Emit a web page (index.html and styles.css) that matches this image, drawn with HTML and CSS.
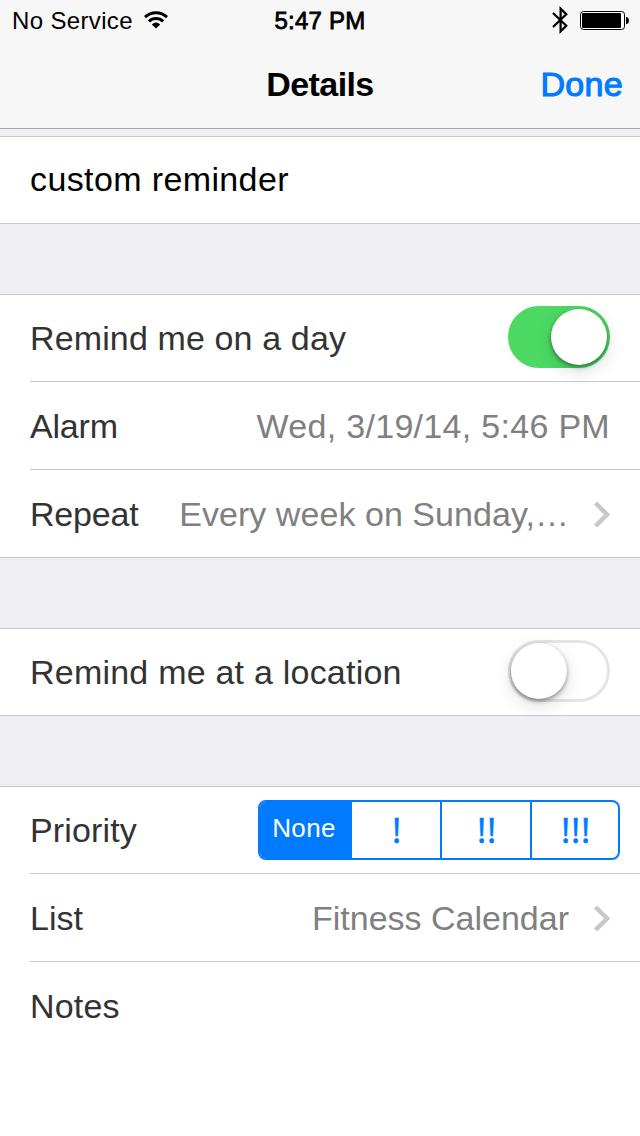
FILE: index.html
```html
<!DOCTYPE html>
<html lang="en">
<head>
<meta charset="utf-8">
<title>Details</title>
<link rel="stylesheet" href="styles.css">
</head>
<body>
<header class="top">
  <div class="status">
    <div class="status-left">
      <span class="carrier">No Service</span>
      <svg class="wifi" width="24" height="18" viewBox="0 0 24 18">
        <g fill="none" stroke="#000">
          <path d="M1 6.100A16 16 0 0 1 23 6.100" stroke-width="3"/>
          <path d="M4.900 10.400A10.300 10.300 0 0 1 19.100 10.400" stroke-width="2.900"/>
        </g>
        <path d="M12 17.600L7.800 13.400A6.500 6.500 0 0 1 16.200 13.400Z"/>
      </svg>
    </div>
    <span class="time">5:47 PM</span>
    <div class="status-right">
      <svg class="bluetooth" width="18" height="28" viewBox="0 0 18 28">
        <path d="M2 7L15.300 19.700L9.600 25.300V2.700L15.300 8.300L2 21" fill="none" stroke="#000" stroke-width="2.200"/>
      </svg>
      <svg class="battery" width="50" height="20" viewBox="0 0 50 20">
        <rect x="0.5" y="0.5" width="44" height="18" rx="3" fill="#fff" stroke="#000"/>
        <rect x="2" y="2" width="39" height="15" rx="1"/>
        <path d="M46 6h1q2 1 2 3.500t-2 3.500h-1z"/>
      </svg>
    </div>
  </div>
  <nav class="nav">
    <h1 class="title">Details</h1>
    <a class="done">Done</a>
  </nav>
</header>
<main>
  <section class="group">
    <div class="row"><span class="entry">custom reminder</span></div>
  </section>
  <section class="group">
    <div class="row">
      <span class="label day">Remind me on a day</span>
      <span class="switch on"><span class="knob"></span></span>
    </div>
    <div class="row">
      <span class="label alarm">Alarm</span>
      <span class="value date">Wed, 3/19/14, 5:46 PM</span>
    </div>
    <div class="row">
      <span class="label repeat">Repeat</span>
      <span class="value every">Every week on Sunday,…</span>
      <svg class="chevron" width="17" height="26" viewBox="0 0 17 26"><path d="M2.500 2L14 13.500L2.500 25" fill="none" stroke="#c7c7cc" stroke-width="4.500"/></svg>
    </div>
  </section>
  <section class="group">
    <div class="row">
      <span class="label location">Remind me at a location</span>
      <span class="switch"><span class="knob"></span></span>
    </div>
  </section>
  <section class="group last">
    <div class="row priority-row">
      <span class="label priority">Priority</span>
      <div class="segments">
        <span class="segment selected">None</span>
        <span class="segment">!</span>
        <span class="segment">!!</span>
        <span class="segment">!!!</span>
      </div>
    </div>
    <div class="row">
      <span class="label list">List</span>
      <span class="value calendar">Fitness Calendar</span>
      <svg class="chevron" width="17" height="26" viewBox="0 0 17 26"><path d="M2.500 2L14 13.500L2.500 25" fill="none" stroke="#c7c7cc" stroke-width="4.500"/></svg>
    </div>
    <div class="row">
      <span class="label notes">Notes</span>
    </div>
  </section>
</main>
</body>
</html>
```
FILE: styles.css
```css
* { box-sizing: border-box; }

body {
  margin: 0;
  width: 640px;
  height: 1136px;
  overflow: hidden;
  display: flex;
  flex-direction: column;
  background: #efeff4;
  font-family: "Liberation Sans", Arial, sans-serif;
  font-size: 34px;
  color: #333;
}

.top {
  height: 129px;
  flex: none;
  background: #f7f7f7;
  border-bottom: 1px solid #a7a7aa;
  color: #000;
}

.status {
  height: 40px;
  padding: 0 10px 0 12px;
  display: grid;
  grid-template-columns: 1fr auto 1fr;
  align-items: center;
  font-size: 24px;
}

.status-left, .status-right { display: flex; align-items: center; }
.status-right { justify-content: flex-end; gap: 11px; }
.carrier { letter-spacing: 0.35px; line-height: 38px; padding-top: 2px; }
.wifi { margin: 0 0 1px 11px; }
.bluetooth { margin-bottom: 1px; }
.battery { margin-top: 2px; }
.time { -webkit-text-stroke: 0.8px #000; letter-spacing: 0.25px; margin-right: 2px; padding-top: 2px; }

.nav {
  height: 88px;
  padding: 0 17px;
  display: grid;
  grid-template-columns: 1fr auto 1fr;
  align-items: center;
}

.title {
  grid-column: 2;
  margin: 0;
  font-size: 34px;
  font-weight: 700;
  letter-spacing: -0.6px;
}

.done {
  justify-self: end;
  color: #007aff;
  letter-spacing: 0.3px;
  -webkit-text-stroke: 1.1px #007aff;
}

main {
  flex: 1;
  padding-top: 7px;
  display: flex;
  flex-direction: column;
  gap: 70px;
}

.group {
  background: #fff;
  border-top: 1px solid #c8c7cc;
  border-bottom: 1px solid #c8c7cc;
}

.group.last { flex: 1; border-bottom: 0; }

.row {
  height: 88px;
  margin-left: 30px;
  padding-right: 30px;
  display: flex;
  align-items: center;
  justify-content: space-between;
  border-bottom: 1px solid #c8c7cc;
  white-space: nowrap;
}

.row:first-child { height: 87px; }
.row:last-child { border-bottom: 0; }
.group:not(.last) .row:last-child { height: 87px; }
.group:not(.last) .row:only-child { height: 86px; }
.row.priority-row { padding-right: 20px; }

.entry { color: #000; letter-spacing: 0.38px; padding-bottom: 1px; }
.label { padding-top: 2px; }
.value { padding-top: 2px; margin-left: auto; color: #808080; }
.chevron { margin-left: 24px; }

.day { letter-spacing: 0.13px; }
.alarm, .repeat { letter-spacing: -0.2px; }
.location { letter-spacing: 0.22px; }
.priority { letter-spacing: 0.15px; }
.notes { letter-spacing: 0.2px; }
.date { letter-spacing: 0.3px; }
.every { letter-spacing: 0.05px; }
.day, .location, .priority, .notes { padding-top: 0; }

.switch {
  width: 102px;
  height: 62px;
  margin-bottom: 2px;
  border-radius: 31px;
  border: 3px solid #e5e5e5;
  display: flex;
  align-items: center;
}

.switch.on { background: #4cd964; border-color: #4cd964; justify-content: flex-end; }

.knob {
  width: 56px;
  height: 56px;
  border-radius: 50%;
  background: #fff;
  box-shadow: 0 2px 4px rgba(0, 0, 0, 0.4), 0 6px 18px rgba(0, 0, 0, 0.14);
}

.segments {
  width: 362px;
  height: 60px;
  display: grid;
  grid-template-columns: 92px 88px 90px 1fr;
  border: 2px solid #007aff;
  border-radius: 8px;
  overflow: hidden;
  color: #007aff;
}

.segment {
  height: 56px;
  display: flex;
  align-items: center;
  justify-content: center;
  padding-left: 2px;
  border-left: 2px solid #007aff;
  font-family: "Open Sans", sans-serif;
  font-size: 35px;
  line-height: 56px;
  letter-spacing: 0.7px;
  -webkit-text-stroke: 0.6px #007aff;
}

.segment:first-child, .segment:nth-child(2) { border-left: 0; }

.segment.selected {
  padding: 0 4px 4px 0;
  background: #007aff;
  color: #fff;
  font-family: "Liberation Sans", Arial, sans-serif;
  font-size: 26px;
  line-height: 52px;
  letter-spacing: 0.35px;
  -webkit-text-stroke: 0;
}
```
